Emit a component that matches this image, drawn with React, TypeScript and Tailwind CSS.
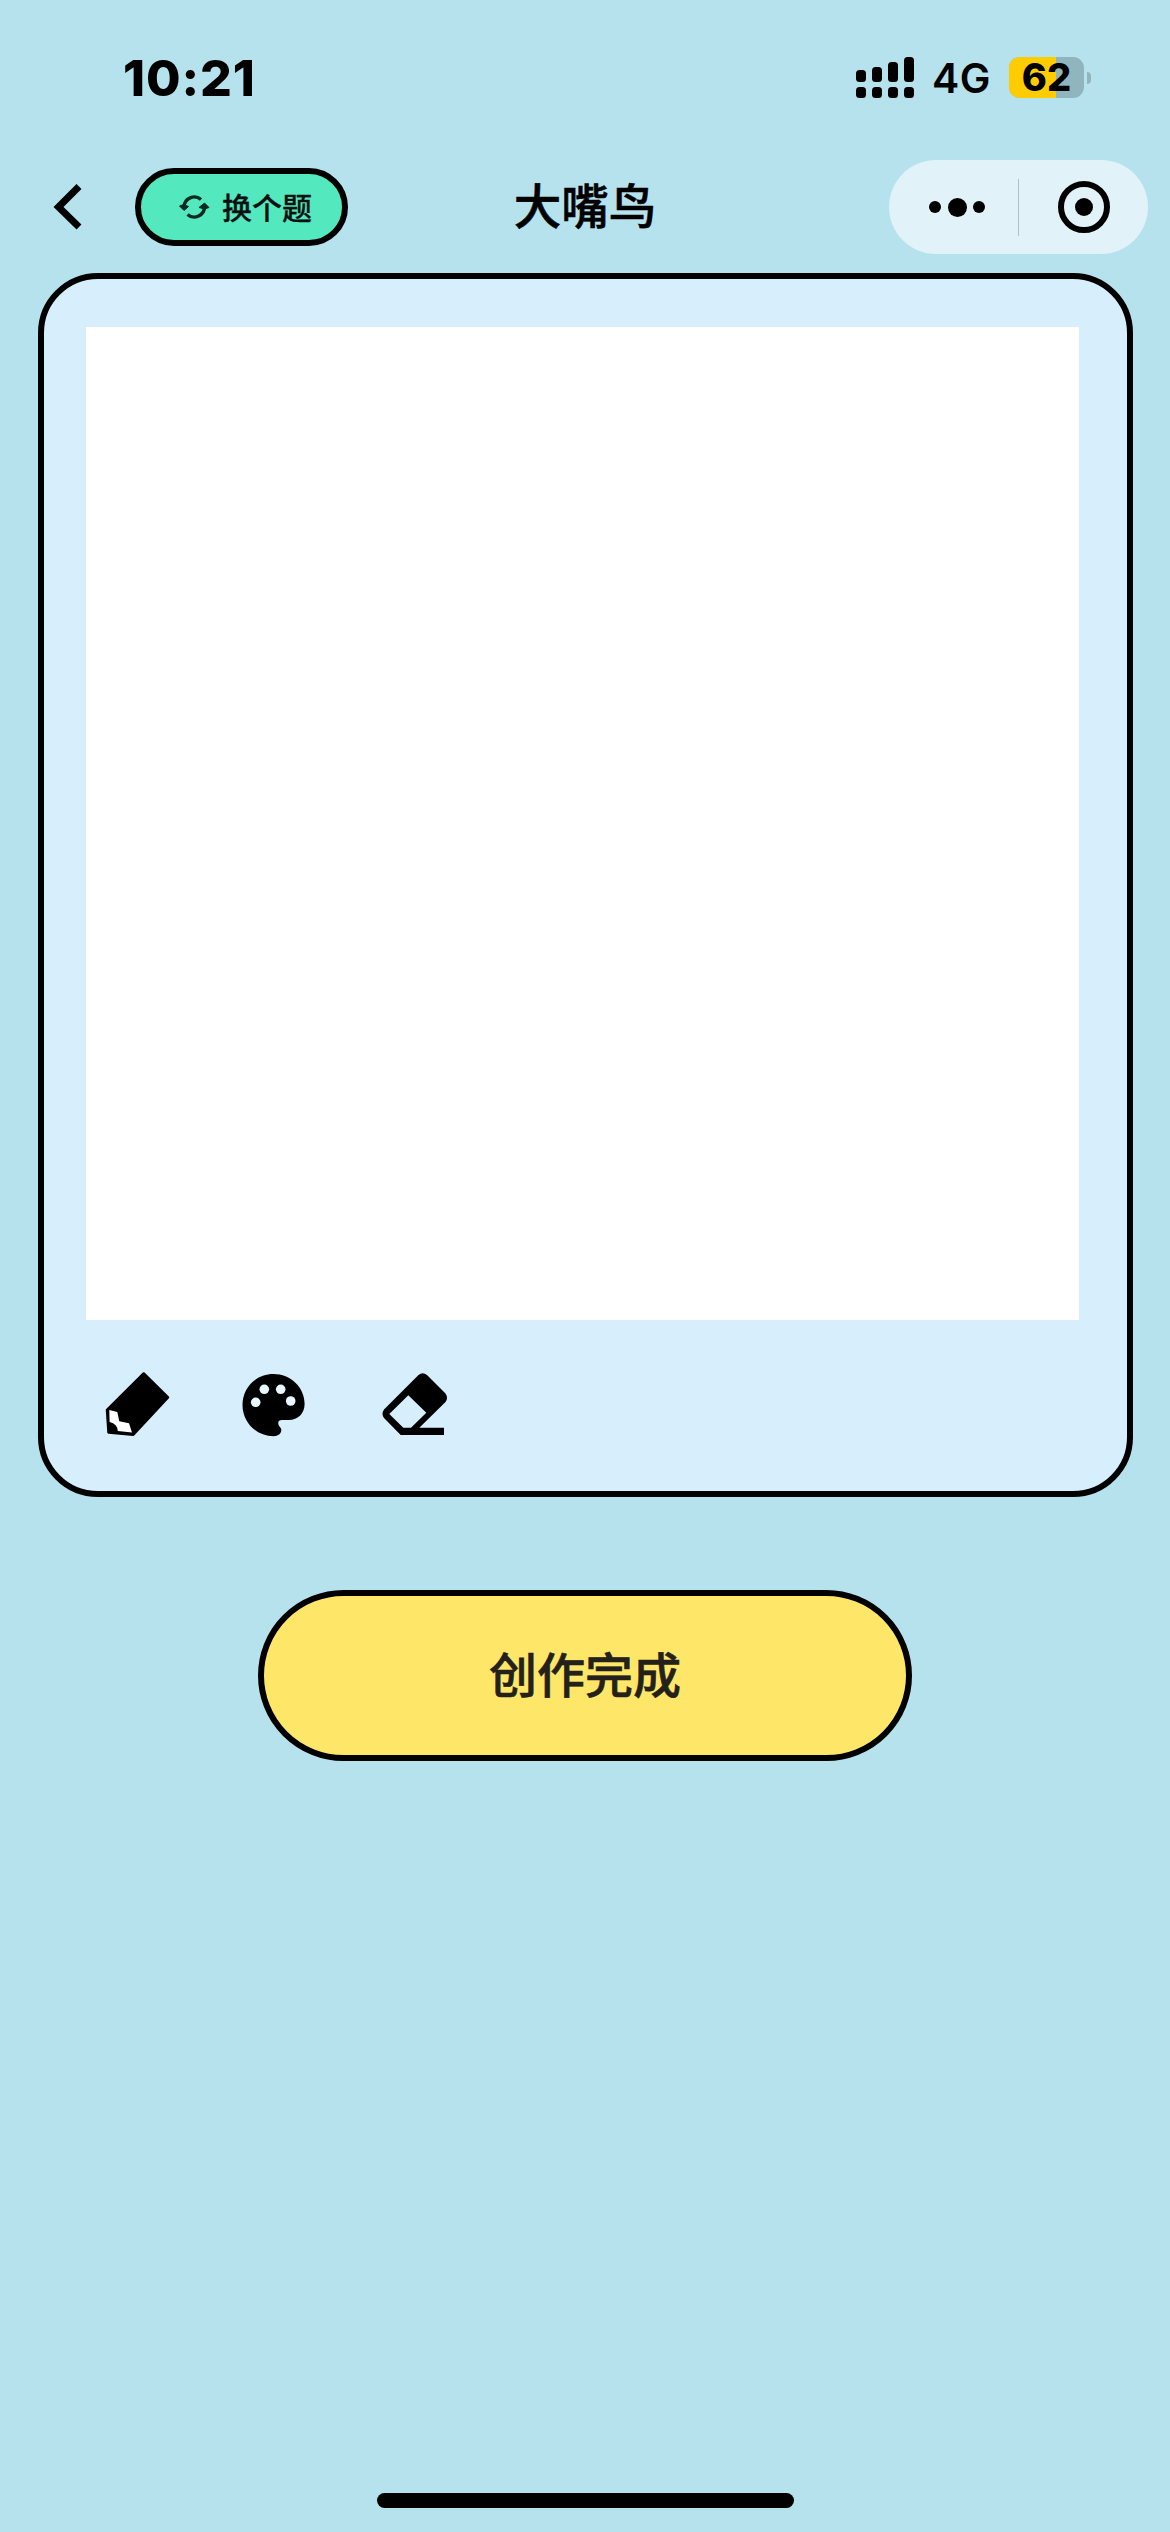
import React from "react";

const SIGNAL_BARS = ["h-[12px]", "h-[15px]", "h-[20px]", "h-[25px]"];

function Signal() {
  return (
    <div className="flex items-end gap-[6px]">
      {SIGNAL_BARS.map((height) => (
        <div key={height} className="flex w-[10px] flex-col gap-[5px]">
          <div className={`${height} rounded-[3.5px] bg-black`} />
          <div className="h-[11px] rounded-[3.5px] bg-black" />
        </div>
      ))}
    </div>
  );
}

function Battery() {
  return (
    <div className="flex items-center gap-[3px]">
      <div className="relative h-[41px] w-[75px] rounded-[11px] bg-[#90b5be]">
        <div className="h-full w-[47px] rounded-l-[11px] bg-[#ffcc00]" />
        <span className="absolute inset-0 flex items-center justify-center text-[38px] leading-[41px] font-extrabold">
          62
        </span>
      </div>
      <div className="h-[12px] w-[4px] rounded-r-full bg-[#90b5be]" />
    </div>
  );
}

function StatusBar() {
  return (
    <header className="flex h-[155px] justify-between pr-[79px] pl-[123px] font-['Inter',sans-serif]">
      <span className="mt-[48px] text-[50px] leading-[60px] font-extrabold tracking-[0.9px]">10:21</span>
      <div className="mt-[57px] flex h-[41px] items-center">
        <Signal />
        <span className="ml-[18px] w-[59px] text-[41px] leading-[50px] font-semibold tracking-[0.5px] whitespace-nowrap">4G</span>
        <div className="ml-[18px]">
          <Battery />
        </div>
      </div>
    </header>
  );
}

function RefreshIcon() {
  return (
    <svg className="h-[32px] w-[32px]" viewBox="0 0 32 32" fill="none" stroke="#0b2a22" strokeWidth="3.400">
      <path d="M6 16a10.300 10.300 0 0 1 17-7.500" />
      <path d="M26.500 15.500a10.300 10.300 0 0 1-17 8" />
      <path d="M1.500 15 5.500 13.500 10.500 15.500 6 19.500Z M21 16.500 26.500 12 31 16.500 26.500 18Z" fill="#0b2a22" strokeWidth="1" />
    </svg>
  );
}

function NavBar() {
  return (
    <nav className="grid h-[118px] grid-cols-[1fr_auto_1fr] items-start">
      <div className="flex pl-[51px]">
        <svg className="mt-[29px] h-[46px] w-[36px]" viewBox="0 0 36 46" fill="none" stroke="#000" strokeWidth="7">
          <path d="M28 2.500 7.500 23l20.500 20" />
        </svg>
        <button className="mt-[13px] ml-[48px] flex h-[78px] w-[213px] items-center rounded-full border-[6px] border-black bg-[#54e8bf] pl-[37px]">
          <RefreshIcon />
          <span className="mb-[3px] ml-[12px] text-[30px] leading-none font-medium whitespace-nowrap text-[#07110f] [-webkit-text-stroke:0.3px_#07110f]">
            换个题
          </span>
        </button>
      </div>
      <h1 className="mt-[19px] text-[47.500px] leading-[60px] font-medium [-webkit-text-stroke:0.600px_#000]">大嘴鸟</h1>
      <div className="mt-[5px] mr-[22px] flex h-[94px] w-[259px] items-center justify-self-end rounded-full bg-[#e1f2f8]">
        <div className="flex w-[129px] items-center justify-center gap-[6.500px] pl-[7px]">
          <i className="h-[12px] w-[12px] rounded-full bg-black" />
          <i className="h-[19px] w-[19px] rounded-full bg-black" />
          <i className="h-[12px] w-[12px] rounded-full bg-black" />
        </div>
        <div className="h-[57px] w-px bg-[#abc3c9]" />
        <div className="ml-[39px] flex h-[52px] w-[52px] items-center justify-center rounded-full border-[6px] border-black">
          <i className="h-[18px] w-[18px] rounded-full bg-black" />
        </div>
      </div>
    </nav>
  );
}

function PencilIcon() {
  return (
    <svg className="h-[72px] w-[72px]" viewBox="0 0 72 72">
      <path
        d="M41.700 5.500 66 29.500 31.300 66.700 6.500 64.500 5 41.800Z"
        fill="#000"
        stroke="#000"
        strokeWidth="2.500"
        strokeLinejoin="round"
      />
      <path d="M7.300 42 15.300 44 17.300 53.300 27 55.300 30 64.500 15.800 63Q15.500 56 7.600 54Z" fill="#fff" />
    </svg>
  );
}

function PaletteIcon() {
  return (
    <svg className="h-[72px] w-[72px]" viewBox="0 0 72 72">
      <path
        d="M35.500 5C18 5 4.500 18.500 4.500 36S18.500 67.200 35.500 67.200C41 67 44.300 63.500 43 59.500C42 57.500 40.200 56.500 40.200 54C40.200 52 41.500 51 44 51H50.500C60.500 51 66.600 44 66.600 35C66.600 18 52.500 5 35.500 5Z"
        fill="#000"
      />
      <g fill="#e8f6fd">
        <circle cx="26.300" cy="20.300" r="4.800" />
        <circle cx="42.700" cy="20.300" r="4.800" />
        <circle cx="17.700" cy="33.300" r="4.800" />
        <circle cx="52.700" cy="32" r="4.800" />
      </g>
    </svg>
  );
}

function EraserIcon() {
  return (
    <svg className="h-[72px] w-[72px]" viewBox="0 0 72 72">
      <path
        fillRule="evenodd"
        d="M40.500 7Q44.700 3.500 49 7L67.500 25.500Q70.500 30 67.500 34L41.300 59.700H66V67H22.700L6 50Q3 46 6 41.500ZM30.300 27.300 11.300 46 25.300 59.700H33L48.300 44.700Z"
        fill="#000"
      />
    </svg>
  );
}

export default function App() {
  return (
    <div className="flex h-[2532px] w-[1170px] flex-col bg-[#b6e2ed] font-['Noto_Sans_CJK_SC',sans-serif] text-black">
      <StatusBar />
      <NavBar />
      <main className="flex flex-col">
        <section className="ml-[38px] h-[1224px] w-[1095px] rounded-[60px] border-[6px] border-black bg-[#d7effc] pt-[48px] pl-[42px]">
          <div className="h-[993px] w-[992.500px] bg-white" />
          <div className="mt-[48px] flex pl-[16px]">
            <PencilIcon />
            <div className="ml-[64px] pt-px">
              <PaletteIcon />
            </div>
            <div className="ml-[68px]">
              <EraserIcon />
            </div>
          </div>
        </section>
        <button className="mt-[93px] flex h-[171px] w-[654px] items-center justify-center self-center rounded-full border-[6px] border-black bg-[#fee668] pb-[7px] text-[48px] leading-none font-medium text-[#24211b] [-webkit-text-stroke:0.600px_#24211b]">
          创作完成
        </button>
      </main>
      <div className="mt-auto mb-[24px] h-[15px] w-[417px] self-center rounded-full bg-black" />
    </div>
  );
}
